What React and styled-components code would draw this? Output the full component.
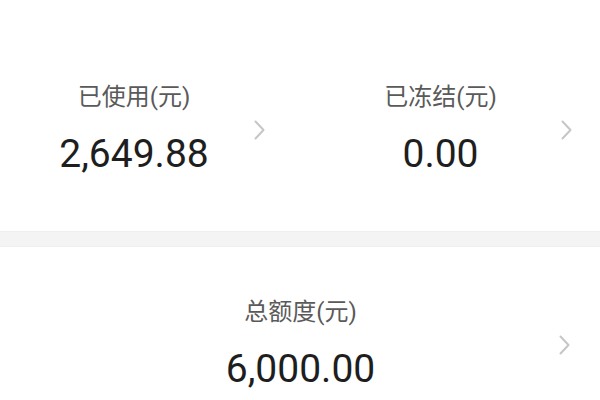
import styled, { createGlobalStyle } from "styled-components";

const GlobalStyle = createGlobalStyle`
  body {
    margin: 0;
    background: #fff;
    font-family: Roboto, "Noto Sans CJK SC", sans-serif;
  }
`;

const Page = styled.div`
  width: 600px;
  height: 400px;
  overflow: hidden;
  background: #fff;
`;

const Section = styled.section`
  display: grid;
  grid-template-columns: ${({ $cols }) => `repeat(${$cols}, 1fr)`};
  padding: ${({ $pad }) => $pad};
  background: #fff;
`;

const Divider = styled.div`
  height: 16px;
  background: #f4f4f4;
  border-top: 1px solid #efefef;
  border-bottom: 1px solid #efefef;
  box-sizing: border-box;
`;

const Cell = styled.div`
  display: flex;
  align-items: center;
  padding-left: ${({ $inset }) => $inset}px;
  padding-right: ${({ $trail }) => $trail}px;
`;

const Body = styled.div`
  flex: 1;
  display: flex;
  flex-direction: column;
  align-items: center;
  gap: 18px;
`;

const Label = styled.div`
  font-size: 24px;
  line-height: 30px;
  color: #5a5a5a;
  white-space: nowrap;
`;

const Amount = styled.div`
  font-size: 39px;
  line-height: 48px;
  color: #1e1e1e;
  white-space: nowrap;
`;

const Arrow = styled.svg`
  flex: none;
  width: 11px;
  height: 20px;
`;

function Chevron() {
  return (
    <Arrow viewBox="0 0 11 20">
      <path
        d="M1.5 1.5 L9.5 10 L1.5 18.5"
        fill="none"
        stroke="#c6c6c6"
        strokeWidth="2"
        strokeLinecap="round"
        strokeLinejoin="round"
      />
    </Arrow>
  );
}

function Stat({ label, amount, inset, trail }) {
  return (
    <Cell $inset={inset} $trail={trail}>
      <Body>
        <Label>{label}</Label>
        <Amount>{amount}</Amount>
      </Body>
      <Chevron />
    </Cell>
  );
}

export default function App() {
  return (
    <Page>
      <GlobalStyle />
      <Section $cols={2} $pad="82px 0 53px">
        <Stat label="已使用(元)" amount="2,649.88" inset={14} trail={35} />
        <Stat label="已冻结(元)" amount="0.00" inset={20} trail={28} />
      </Section>
      <Divider />
      <Section $cols={1} $pad="50px 0 40px">
        <Stat label="总额度(元)" amount="6,000.00" inset={42} trail={30} />
      </Section>
    </Page>
  );
}
